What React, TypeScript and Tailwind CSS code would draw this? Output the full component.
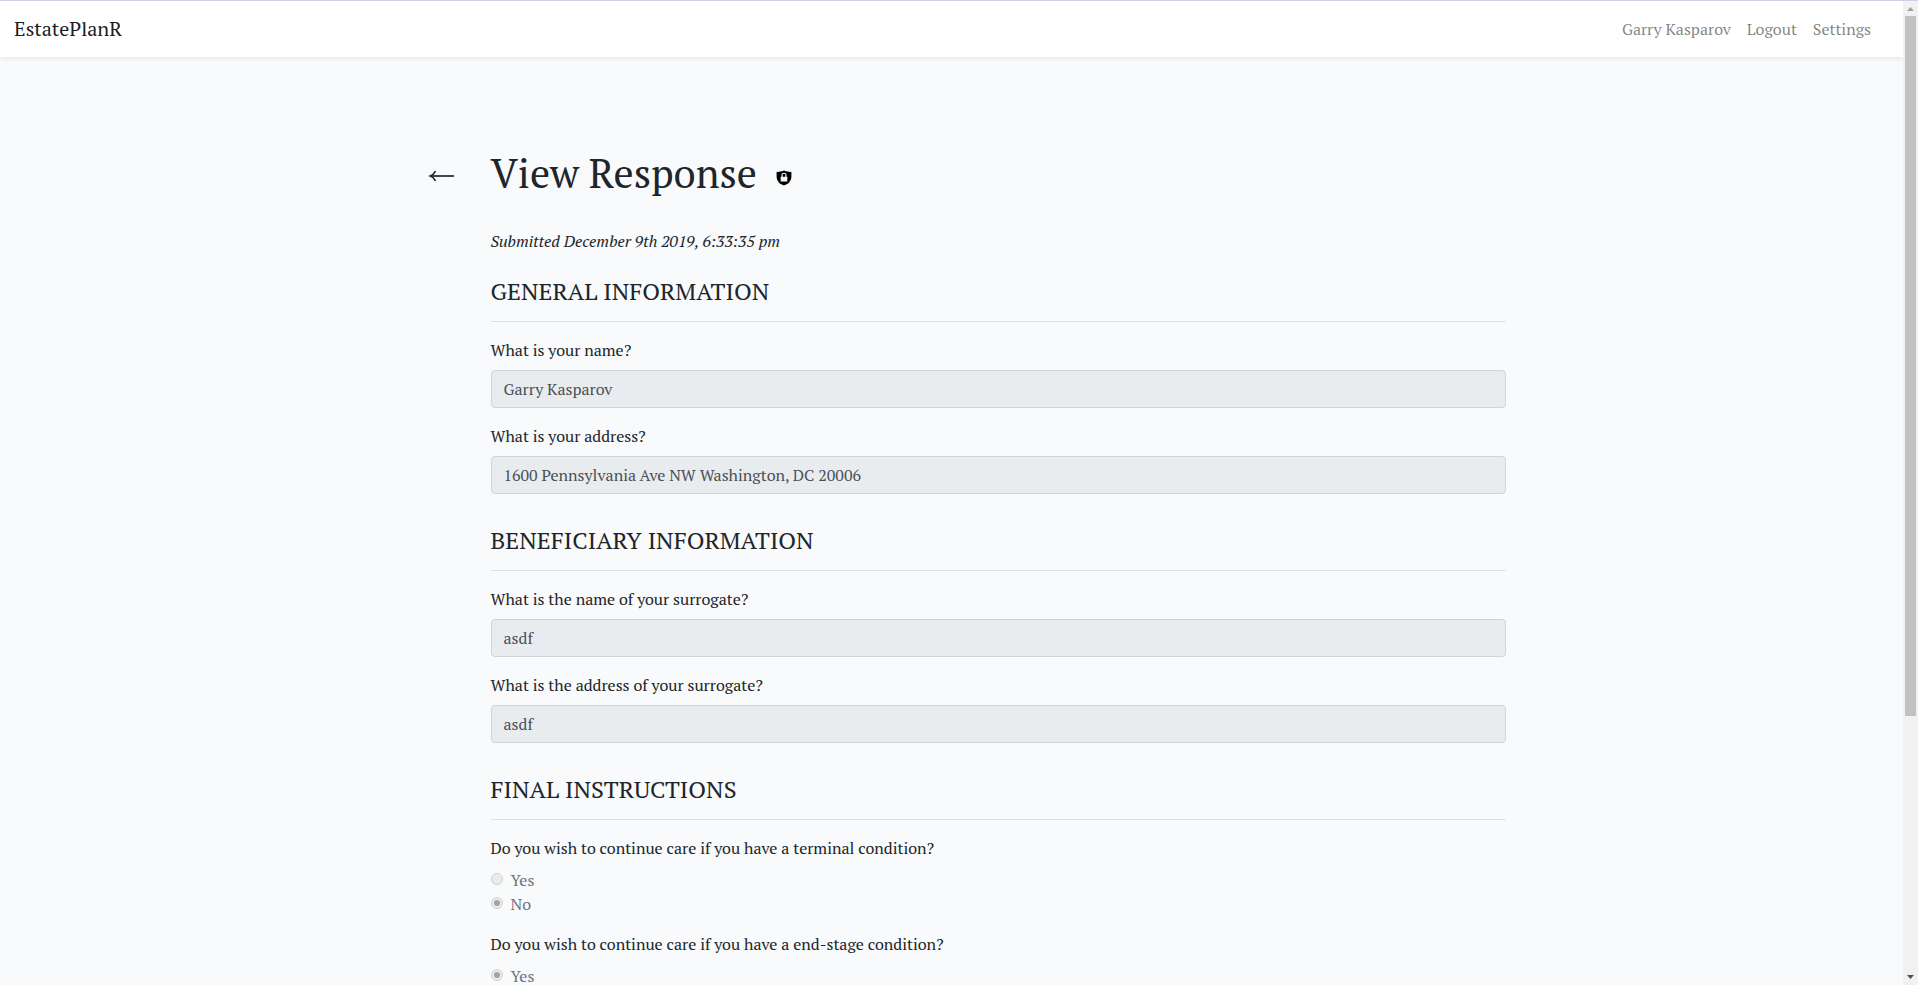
import React from "react";

type TextQuestion = { id: string; label: string; value: string };
type ChoiceQuestion = { id: string; label: string; answer: "Yes" | "No" };

const general: TextQuestion[] = [
  { id: "name", label: "What is your name?", value: "Garry Kasparov" },
  { id: "address", label: "What is your address?", value: "1600 Pennsylvania Ave NW Washington, DC 20006" },
];

const beneficiary: TextQuestion[] = [
  { id: "surrogate-name", label: "What is the name of your surrogate?", value: "asdf" },
  { id: "surrogate-address", label: "What is the address of your surrogate?", value: "asdf" },
];

const instructions: ChoiceQuestion[] = [
  { id: "terminal", label: "Do you wish to continue care if you have a terminal condition?", answer: "No" },
  { id: "end-stage", label: "Do you wish to continue care if you have a end-stage condition?", answer: "Yes" },
];

function Section({ title, children }: { title: string; children: React.ReactNode }) {
  return (
    <section className="mb-8">
      <h2 className="text-2xl leading-7 uppercase">{title}</h2>
      <hr className="my-4 border-t border-black/10" />
      <div className="flex flex-col gap-4">{children}</div>
    </section>
  );
}

function TextField({ id, label, value }: TextQuestion) {
  return (
    <div className="flex flex-col gap-2">
      <label htmlFor={id} className="leading-6">{label}</label>
      <input
        id={id}
        type="text"
        disabled
        defaultValue={value}
        className="h-[38px] w-full rounded border border-[#ced4da] bg-[#e9ecef] px-3 text-[#495057]"
      />
    </div>
  );
}

function ChoiceField({ id, label, answer }: ChoiceQuestion) {
  return (
    <fieldset>
      <legend className="mb-2 leading-6">{label}</legend>
      {["Yes", "No"].map((option) => (
        <div key={option} className="flex h-6 items-start gap-2">
          <input
            id={`${id}-${option}`}
            type="radio"
            name={id}
            disabled
            defaultChecked={option === answer}
            className="mt-[5px] grid size-3 appearance-none place-items-center rounded-full border border-[#d0d0d0] bg-[#ebebeb] before:size-1.5 before:rounded-full checked:before:bg-[#a3a3a3]"
          />
          <label htmlFor={`${id}-${option}`} className="leading-6 text-[#6c757d]">{option}</label>
        </div>
      ))}
    </fieldset>
  );
}

function ShieldLock() {
  return (
    <svg viewBox="0 0 16 16" className="size-4" role="img" aria-label="Encrypted">
      <path d="M8 .5C6.300 1.300 3.500 1.900.6 2v4.500c0 4.300 2.700 7.500 7.400 9 4.700-1.500 7.400-4.700 7.400-9V2C12.500 1.900 9.700 1.300 8 .5Z" fill="#000" />
      <path d="M6 7V5.300a2 2 0 0 1 4 0V7" fill="none" stroke="#f8fafc" strokeWidth="1.100" />
      <rect x="4.700" y="6.700" width="6.600" height="4.800" rx=".5" fill="#f8fafc" />
    </svg>
  );
}

function ScrollRail() {
  return (
    <div aria-hidden="true" className="flex w-[15px] shrink-0 flex-col items-center bg-[#f1f1f1]">
      <svg viewBox="0 0 15 15" className="size-[15px] shrink-0"><path d="M4 10h7L7.500 6Z" fill="#a3a3a3" /></svg>
      <div className="w-full min-h-0 flex-1 px-0.5">
        <div className="h-[73.4%] bg-[#c1c1c1]" />
      </div>
      <svg viewBox="0 0 15 15" className="size-[15px] shrink-0"><path d="M4 5h7L7.500 9Z" fill="#505050" /></svg>
    </div>
  );
}

export default function App() {
  return (
    <div className="flex h-screen flex-col border-t border-[#d0d0e8] bg-[#f8fafc] font-['PT_Serif','Liberation_Serif',serif] text-base text-[#212529]">
      <div className="flex min-h-0 flex-1">
        <div className="min-w-0 flex-1 overflow-y-auto bg-[#f8fafc] [scrollbar-width:none]">
          <header className="flex h-14 items-center justify-between bg-white pr-8 pl-3.5 shadow-[0_2px_4px_rgba(0,0,0,0.075)]">
            <a href="#" className="text-xl text-black/90">EstatePlanR</a>
            <nav className="flex gap-4 text-black/50">
              <a href="#">Garry Kasparov</a>
              <a href="#">Logout</a>
              <a href="#">Settings</a>
            </nav>
          </header>
          <div className="pr-0.5">
            <main className="mx-auto flex max-w-[1110px] pt-[92px]">
              <div className="w-[95px] shrink-0 pl-8">
                <a href="#" aria-label="Back" className="flex h-12 items-center">
                  <svg viewBox="0 0 28 14" className="mt-1.5 h-3.5 w-7" fill="none" stroke="#212529" strokeWidth="1.700">
                    <path d="M3 7h23" />
                    <path d="M7.500 2.200C6.200 4.600 4.300 6.300 2.300 7c2 .7 3.900 2.400 5.200 4.800" />
                  </svg>
                </a>
              </div>
              <div className="min-w-0 flex-1">
                <div className="flex items-center gap-[19px]">
                  <h1 className="text-[40px] leading-[48px]">View Response</h1>
                  <div className="pt-2.5"><ShieldLock /></div>
                </div>
                <p className="mt-8 mb-6 leading-6 italic">Submitted December 9th 2019, 6:33:35 pm</p>
                <Section title="General Information">
                  {general.map((q) => <TextField key={q.id} {...q} />)}
                </Section>
                <Section title="Beneficiary Information">
                  {beneficiary.map((q) => <TextField key={q.id} {...q} />)}
                </Section>
                <Section title="Final Instructions">
                  {instructions.map((q) => <ChoiceField key={q.id} {...q} />)}
                </Section>
              </div>
            </main>
          </div>
        </div>
        <ScrollRail />
      </div>
    </div>
  );
}
